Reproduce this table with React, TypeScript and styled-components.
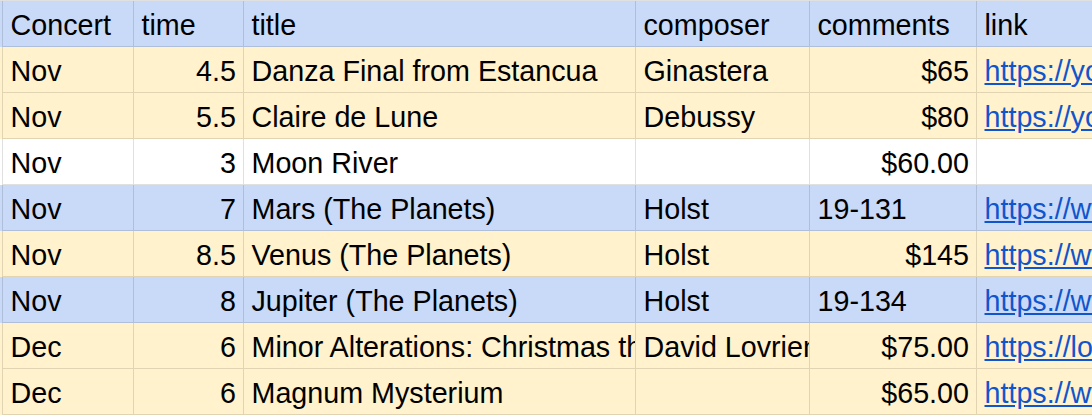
import React from "react";
import styled, { createGlobalStyle } from "styled-components";

type Tone = "header" | "yellow" | "white" | "blue";

type Row = {
  tone: Tone;
  concert: string;
  time: string;
  title: string;
  composer: string;
  comments: string;
  // numbers sit to the right, free text to the left
  commentsRight?: boolean;
  link: string;
};

const rows: Row[] = [
  { tone: "yellow", concert: "Nov", time: "4.5", title: "Danza Final from Estancua", composer: "Ginastera", comments: "$65", commentsRight: true, link: "https://youtu.be/Q2rLJ2pSrUk" },
  { tone: "yellow", concert: "Nov", time: "5.5", title: "Claire de Lune", composer: "Debussy", comments: "$80", commentsRight: true, link: "https://youtu.be/WNcsUNKlAKw" },
  { tone: "white", concert: "Nov", time: "3", title: "Moon River", composer: "", comments: "$60.00", commentsRight: true, link: "" },
  { tone: "blue", concert: "Nov", time: "7", title: "Mars (The Planets)", composer: "Holst", comments: "19-131", link: "https://www.jwpepper.com/Mars" },
  { tone: "yellow", concert: "Nov", time: "8.5", title: "Venus (The Planets)", composer: "Holst", comments: "$145", commentsRight: true, link: "https://www.jwpepper.com/Venus" },
  { tone: "blue", concert: "Nov", time: "8", title: "Jupiter (The Planets)", composer: "Holst", comments: "19-134", link: "https://www.jwpepper.com/Jupiter" },
  { tone: "yellow", concert: "Dec", time: "6", title: "Minor Alterations: Christmas through the Looking Glass", composer: "David Lovrien", comments: "$75.00", commentsRight: true, link: "https://lovrien.com/minor" },
  { tone: "yellow", concert: "Dec", time: "6", title: "Magnum Mysterium", composer: "", comments: "$65.00", commentsRight: true, link: "https://www.jwpepper.com/Magnum" },
];

const tones: Record<Tone, string> = {
  header: "#c9daf8",
  yellow: "#fff2cc",
  white: "#ffffff",
  blue: "#c9daf8",
};

export default function App() {
  return (
    <>
      <GlobalStyle />
      <Sheet>
        <SheetRow $tone="header">
          <Cell>Concert</Cell>
          <Cell>time</Cell>
          <Cell>title</Cell>
          <Cell>composer</Cell>
          <Cell>comments</Cell>
          <Cell>link</Cell>
        </SheetRow>
        {rows.map((row, i) => (
          <SheetRow key={i} $tone={row.tone}>
            <Cell>{row.concert}</Cell>
            <Cell $right>{row.time}</Cell>
            <Cell>{row.title}</Cell>
            <Cell>{row.composer}</Cell>
            <Cell $right={row.commentsRight}>{row.comments}</Cell>
            <Cell>{row.link && <Link href={row.link}>{row.link}</Link>}</Cell>
          </SheetRow>
        ))}
      </Sheet>
    </>
  );
}

const GlobalStyle = createGlobalStyle`
  html, body {
    margin: 0;
    padding: 0;
    background: #ffffff;
    overflow: hidden;
  }
  body {
    font-family: "Liberation Sans", Arial, sans-serif;
  }
`;

const gridLine = "rgba(0, 0, 0, 0.12)";

const Sheet = styled.div`
  width: 1400px;
  border-top: 1px solid ${gridLine};
`;

const SheetRow = styled.div<{ $tone: Tone }>`
  display: grid;
  grid-template-columns: 132px 110px 392px 174px 167px 300px;
  padding-left: 2px;
  height: 46px;
  box-sizing: border-box;
  background: ${(p) => tones[p.$tone]};

  & > div:first-child {
    border-left: 1px solid ${gridLine};
  }
`;

const Cell = styled.div<{ $right?: boolean }>`
  display: flex;
  align-items: flex-end;
  justify-content: ${(p) => (p.$right ? "flex-end" : "flex-start")};
  box-sizing: border-box;
  min-width: 0;
  overflow: hidden;
  white-space: nowrap;
  padding: 0 7px 7.5px 7.5px;
  border-right: 1px solid ${gridLine};
  border-bottom: 1px solid ${gridLine};
  font-size: 28.7px;
  line-height: 28px;
  color: #000000;
`;

const Link = styled.a`
  color: #1155cc;
  text-decoration: underline;
  text-underline-offset: 2px;
`;
